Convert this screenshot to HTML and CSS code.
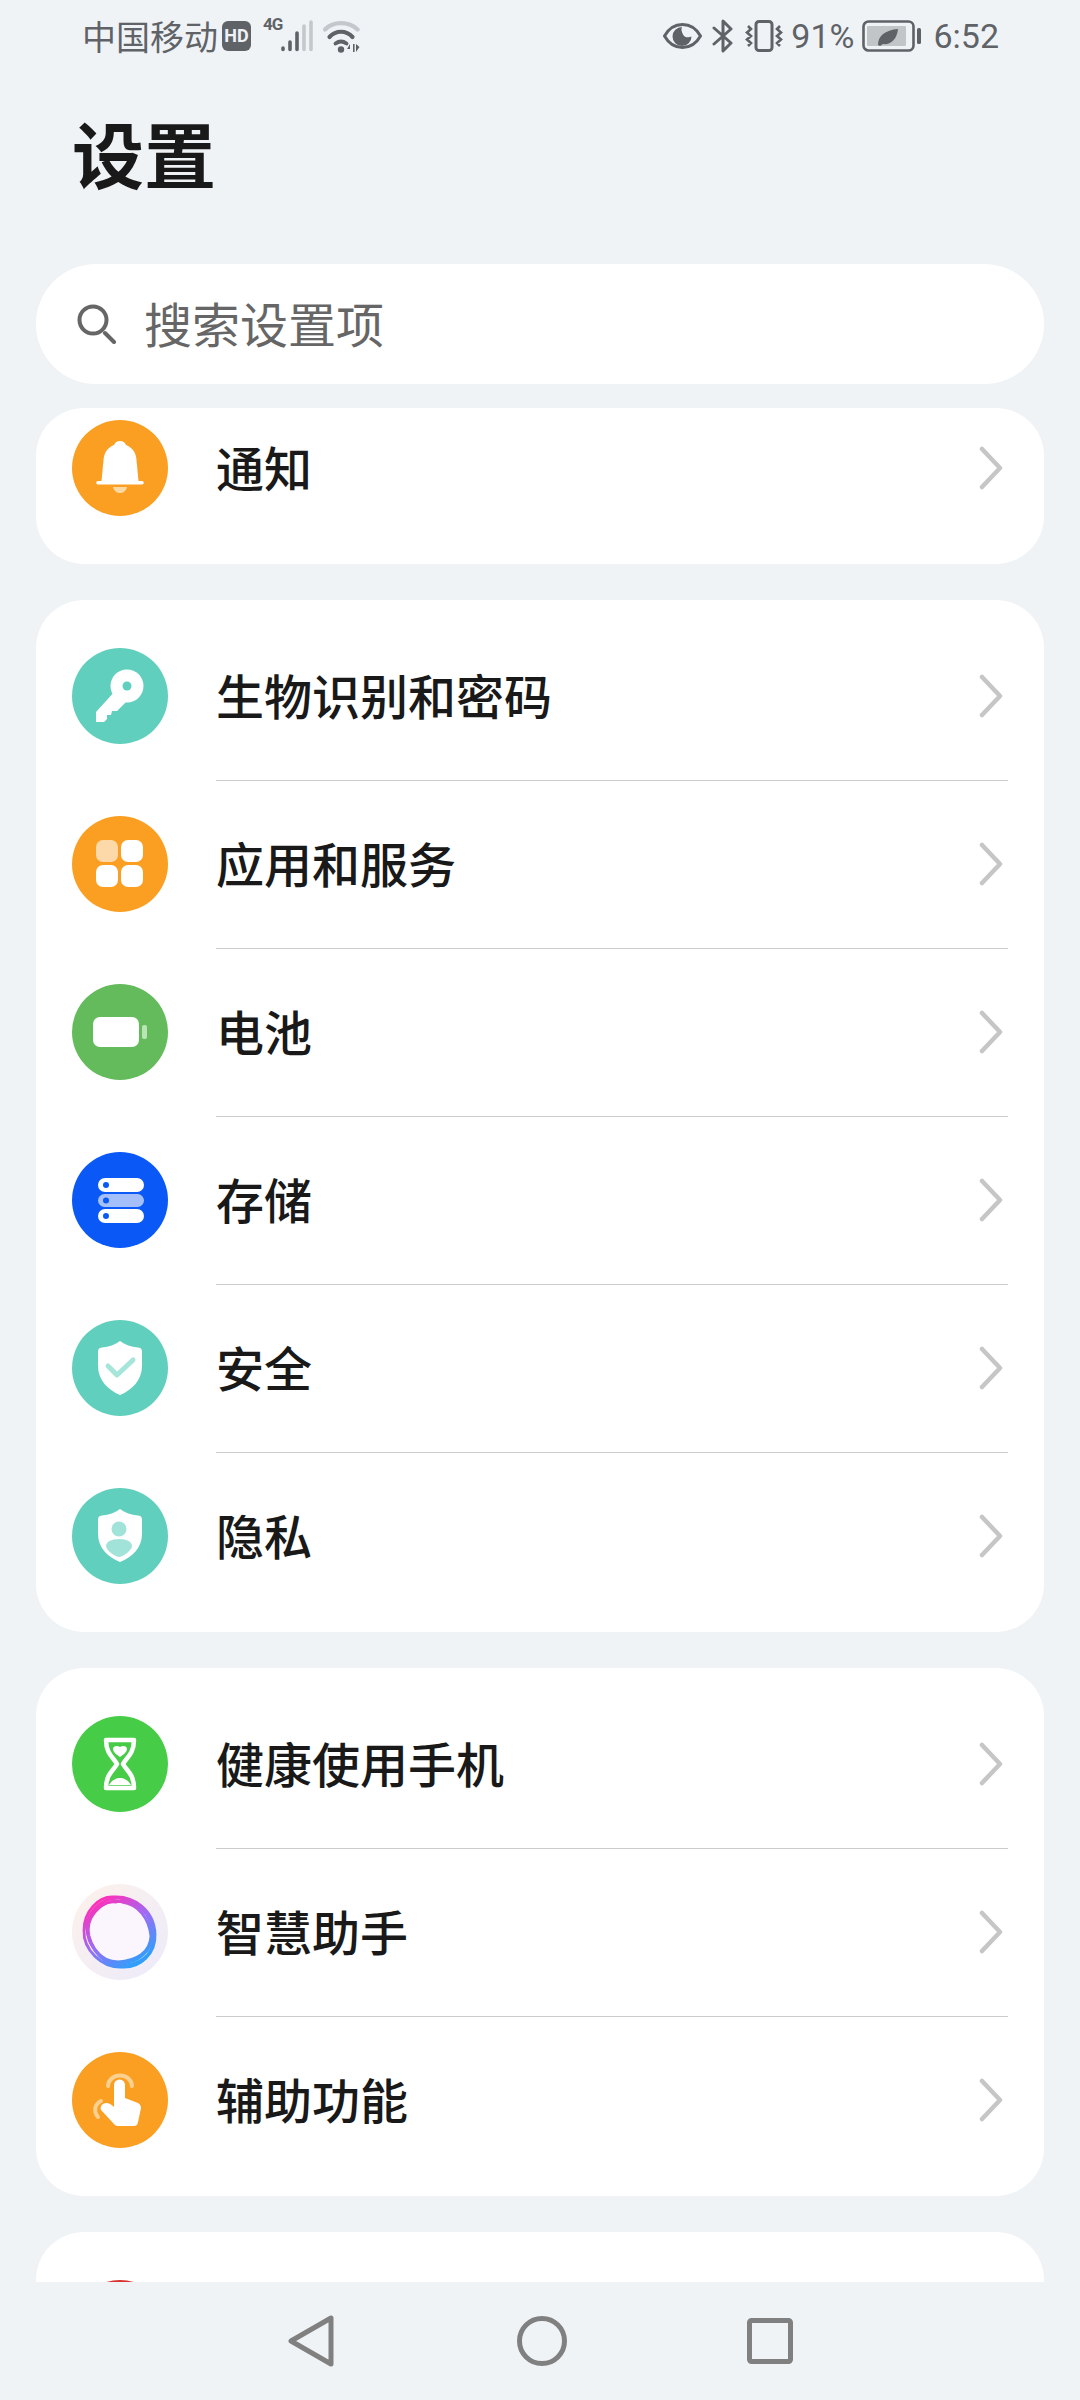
FILE: index.html
```html
<!DOCTYPE html>
<html lang="zh-CN">
<head>
<meta charset="utf-8">
<title>设置</title>
<link rel="stylesheet" href="styles.css">
</head>
<body>
<div class="screen">
  <header class="status">
    <div class="status-group">
      <span class="carrier">中国移动</span>
      <span class="hd">HD</span>
      <span class="net">4G</span>
      <svg class="sig" width="32" height="32" viewBox="0 0 32 32"><g fill="none" stroke-linecap="round" stroke-width="3.600"><path d="M2 28v1.500M9 22v7.500M16 13v16.500" stroke="#5f6368"/><path d="M23 6v23.500M30 2v27.500" stroke="#c4c8cc"/></g></svg>
      <svg class="wifi" width="37" height="33" viewBox="0 0 37 33"><path d="M2 9.500C10 1 26 1 34.500 9.500" fill="none" stroke="#c4c8cc" stroke-width="4.400" stroke-linecap="round"/><path d="M6.500 17C13 10 23 10 29.500 17" fill="none" stroke="#5f6368" stroke-width="4.200" stroke-linecap="round"/><path d="M12.500 23.500c4-3 7-3 11 0" fill="none" stroke="#5f6368" stroke-width="3.800" stroke-linecap="round"/><circle cx="18" cy="29.500" r="3.200" fill="#5f6368"/><path d="M27 24l-3 5h3zM30 24h1.600v8H30zM33 24v8l3.500-5z" fill="#5f6368"/></svg>
    </div>
    <div class="status-group">
      <svg width="39" height="26" viewBox="0 0 39 26"><path d="M1.500 13C6 5 12 1.500 19.500 1.500S33 5 37.500 13C33 21 27 24.500 19.500 24.500S6 21 1.500 13Z" fill="none" stroke="#5f6368" stroke-width="3"/><path d="M19 4a9.500 9.500 0 1 0 9.500 9.500c-3 1.500-7 1-8.500-2S18 6 19 4Z" fill="#5f6368"/></svg>
      <svg class="bt" width="22" height="34" viewBox="0 0 22 34"><path d="M2 9l17 15-8 8V2l8 8L2 25" fill="none" stroke="#5f6368" stroke-width="3" stroke-linejoin="round" stroke-linecap="round"/></svg>
      <svg class="vib" width="38" height="32" viewBox="0 0 38 32"><rect x="11" y="1.500" width="16" height="29" rx="3" fill="none" stroke="#5f6368" stroke-width="3"/><path d="M3 6l3 3-4 3.500 4 3.500-4 3.500 4 3.500-3 3M35 6l-3 3 4 3.500-4 3.500 4 3.500-4 3.500 3 3" fill="none" stroke="#5f6368" stroke-width="2.600"/></svg>
      <span class="pct">91%</span>
      <svg class="bat" width="60" height="32" viewBox="0 0 60 32"><rect x="1.500" y="1.500" width="50" height="29" rx="5" fill="none" stroke="#5f6368" stroke-width="2.600"/><rect x="5" y="6" width="39" height="20" rx="1" fill="#c2c5c8"/><path d="M16 25c0-9 7-15 20-16-1 11-8 16-15 15l-3 2z" fill="#5f6368"/><rect x="55" y="8" width="4" height="16" rx="1.500" fill="#5f6368"/></svg>
      <span class="time">6:52</span>
    </div>
  </header>

  <h1 class="title">设置</h1>

  <div class="search">
    <svg class="search-icon" width="40" height="40" viewBox="0 0 40 40"><circle cx="16" cy="16" r="13.500" fill="none" stroke="#666" stroke-width="4"/><path d="M28 29l9 9" stroke="#666" stroke-width="4" stroke-linecap="round"/></svg>
    <span class="search-text">搜索设置项</span>
  </div>

  <main class="list">
    <section class="card card-scrolled">
      <div class="row">
        <svg class="icon" width="96" height="96" viewBox="0 0 96 96"><circle cx="48" cy="48" r="48" fill="#fa9f22"/><path d="M42 25C35.500 27.500 32 33 31.500 40l-2 21H26a1.800 1.800 0 0 0 0 3.600h44a1.800 1.800 0 0 0 0-3.600h-3.500l-2-21C64 33 60.500 27.500 54 25c-1-2.500-3-4-6-4s-5 1.500-6 4Z" fill="#fff"/><path d="M41 67h14c-1 4-4 6-7 6s-6-2-7-6Z" fill="#fcd9a3"/></svg>
        <div class="row-body"><span class="label">通知</span><svg width="24" height="44" viewBox="0 0 24 44" class="chev"><path d="M3 3l18 19L3 41" fill="none" stroke="#c6c6c6" stroke-width="4.500" stroke-linecap="round" stroke-linejoin="round"/></svg></div>
      </div>
    </section>

    <section class="card">
      <div class="row">
        <svg class="icon" width="96" height="96" viewBox="0 0 96 96"><circle cx="48" cy="48" r="48" fill="#61cfbe"/><path d="M44 42L24 64v10h8l3-3v-4h4l1-4h5l11-11Z" fill="#fff"/><circle cx="55" cy="38" r="16.500" fill="#fff"/><circle cx="55" cy="38" r="4.500" fill="#61cfbe"/></svg>
        <div class="row-body"><span class="label">生物识别和密码</span><svg width="24" height="44" viewBox="0 0 24 44" class="chev"><path d="M3 3l18 19L3 41" fill="none" stroke="#c6c6c6" stroke-width="4.500" stroke-linecap="round" stroke-linejoin="round"/></svg></div>
      </div>
      <div class="row">
        <svg class="icon" width="96" height="96" viewBox="0 0 96 96"><circle cx="48" cy="48" r="48" fill="#fa9f22"/><rect x="24" y="24" width="22" height="22" rx="7" fill="#fdd8a8"/><rect x="49" y="24" width="22" height="22" rx="7" fill="#fff"/><rect x="24" y="49" width="22" height="22" rx="7" fill="#fff"/><rect x="49" y="49" width="22" height="22" rx="7" fill="#fff"/></svg>
        <div class="row-body"><span class="label">应用和服务</span><svg width="24" height="44" viewBox="0 0 24 44" class="chev"><path d="M3 3l18 19L3 41" fill="none" stroke="#c6c6c6" stroke-width="4.500" stroke-linecap="round" stroke-linejoin="round"/></svg></div>
      </div>
      <div class="row">
        <svg class="icon" width="96" height="96" viewBox="0 0 96 96"><circle cx="48" cy="48" r="48" fill="#64bb5c"/><rect x="21" y="33" width="46" height="30" rx="7" fill="#fff"/><rect x="70" y="41" width="5" height="14" rx="2" fill="#b9e4b4"/></svg>
        <div class="row-body"><span class="label">电池</span><svg width="24" height="44" viewBox="0 0 24 44" class="chev"><path d="M3 3l18 19L3 41" fill="none" stroke="#c6c6c6" stroke-width="4.500" stroke-linecap="round" stroke-linejoin="round"/></svg></div>
      </div>
      <div class="row">
        <svg class="icon" width="96" height="96" viewBox="0 0 96 96"><circle cx="48" cy="48" r="48" fill="#0a59f7"/><rect x="26" y="26" width="46" height="14" rx="7" fill="#fff"/><rect x="26" y="42" width="46" height="13" rx="6.500" fill="#a5bffb"/><rect x="26" y="57" width="46" height="14" rx="7" fill="#fff"/><circle cx="34" cy="33" r="3" fill="#0a59f7"/><circle cx="34" cy="48.500" r="3" fill="#0a59f7"/><circle cx="34" cy="64" r="3" fill="#0a59f7"/></svg>
        <div class="row-body"><span class="label">存储</span><svg width="24" height="44" viewBox="0 0 24 44" class="chev"><path d="M3 3l18 19L3 41" fill="none" stroke="#c6c6c6" stroke-width="4.500" stroke-linecap="round" stroke-linejoin="round"/></svg></div>
      </div>
      <div class="row">
        <svg class="icon" width="96" height="96" viewBox="0 0 96 96"><circle cx="48" cy="48" r="48" fill="#61cfbe"/><path d="M48 21C53 24.500 59 27 66 27.500 69 28 70 29 70 32V46C70 60 60 70 48 75 36 70 26 60 26 46V32C26 29 27 28 30 27.500 37 27 43 24.500 48 21Z" fill="#fff"/><path d="M36 46l9 9 16-15" fill="none" stroke="#a6e5da" stroke-width="5" stroke-linecap="round" stroke-linejoin="round"/></svg>
        <div class="row-body"><span class="label">安全</span><svg width="24" height="44" viewBox="0 0 24 44" class="chev"><path d="M3 3l18 19L3 41" fill="none" stroke="#c6c6c6" stroke-width="4.500" stroke-linecap="round" stroke-linejoin="round"/></svg></div>
      </div>
      <div class="row">
        <svg class="icon" width="96" height="96" viewBox="0 0 96 96"><circle cx="48" cy="48" r="48" fill="#61cfbe"/><path d="M48 21C53 24.500 59 27 66 27.500 69 28 70 29 70 32V46C70 60 60 69 48 74 36 69 26 60 26 46V32C26 29 27 28 30 27.500 37 27 43 24.500 48 21Z" fill="#fff"/><circle cx="47" cy="41" r="7.500" fill="#a2e3d9"/><path d="M47 51C55 51 60 54 60 58 60 62 52 68 47 69 42 68 34 62 34 58 34 54 39 51 47 51Z" fill="#a2e3d9"/></svg>
        <div class="row-body"><span class="label">隐私</span><svg width="24" height="44" viewBox="0 0 24 44" class="chev"><path d="M3 3l18 19L3 41" fill="none" stroke="#c6c6c6" stroke-width="4.500" stroke-linecap="round" stroke-linejoin="round"/></svg></div>
      </div>
    </section>

    <section class="card">
      <div class="row">
        <svg class="icon" width="96" height="96" viewBox="0 0 96 96"><circle cx="48" cy="48" r="48" fill="#47cc47"/><path d="M34 24H62C62 38 54 42 51 48 54 54 62 58 62 72H34C34 58 42 54 45 48 42 42 34 38 34 24Z" fill="none" stroke="#fff" stroke-width="4.500" stroke-linejoin="round"/><path d="M48 41c-3-2-7-5-7-8 0-3 4-4 7-2 3-2 7-1 7 2 0 3-4 6-7 8Z" fill="#fff"/><path d="M37 69c3-5 7-7 11-7s8 2 11 7Z" fill="#fff"/></svg>
        <div class="row-body"><span class="label">健康使用手机</span><svg width="24" height="44" viewBox="0 0 24 44" class="chev"><path d="M3 3l18 19L3 41" fill="none" stroke="#c6c6c6" stroke-width="4.500" stroke-linecap="round" stroke-linejoin="round"/></svg></div>
      </div>
      <div class="row">
        <svg class="icon" width="96" height="96" viewBox="0 0 96 96"><defs><linearGradient id="orb-bg" x1="0" y1="0" x2="1" y2="1"><stop offset="0" stop-color="#fdf1ea"/><stop offset="1" stop-color="#ecebfb"/></linearGradient><linearGradient id="orb-ring" gradientUnits="userSpaceOnUse" x1="24" y1="18" x2="64" y2="80"><stop offset="0" stop-color="#ff2fb8"/><stop offset=".5" stop-color="#9c6cf5"/><stop offset="1" stop-color="#2f9ffa"/></linearGradient></defs><circle cx="48" cy="48" r="48" fill="url(#orb-bg)"/><circle cx="48" cy="48" r="31" fill="#fbf5fd"/><g fill="none" stroke="url(#orb-ring)" stroke-width="2.800"><path d="M12 46C12 28 26 12 42 13 62 12 82 26 83 50 84 70 68 84 50 83 30 84 11 66 12 46Z"/><path d="M14 40C20 24 30 14 47 14 66 17 79 30 82 47 83 68 72 79 54 81 35 85 17 68 14 40Z"/><path d="M17 52C13 34 28 16 44 18 58 14 77 24 79 44 85 61 70 76 56 78 40 85 22 71 17 52Z"/><path d="M15 44C16 32 32 13 50 18 66 20 77 34 79 52 78 69 64 77 46 78 28 78 15 60 15 44Z"/></g></svg>
        <div class="row-body"><span class="label">智慧助手</span><svg width="24" height="44" viewBox="0 0 24 44" class="chev"><path d="M3 3l18 19L3 41" fill="none" stroke="#c6c6c6" stroke-width="4.500" stroke-linecap="round" stroke-linejoin="round"/></svg></div>
      </div>
      <div class="row">
        <svg class="icon" width="96" height="96" viewBox="0 0 96 96"><circle cx="48" cy="48" r="48" fill="#fa9f22"/><path d="M36 34C37 20 59 20 60 34" fill="none" stroke="#fcd08f" stroke-width="4" stroke-linecap="round"/><path d="M29 49C23 52 21 59 26 65" fill="none" stroke="#fcd08f" stroke-width="4" stroke-linecap="round"/><path d="M42 33a5.500 5.500 0 0 1 11 0V46L66 51C68 52 69 54 69 56L66 70C65.500 73 64 74 62 74H46C44 74 43 73 42 72L29 58C28 56 29 53 31 52 34 50 38 51 42 55Z" fill="#fff"/></svg>
        <div class="row-body"><span class="label">辅助功能</span><svg width="24" height="44" viewBox="0 0 24 44" class="chev"><path d="M3 3l18 19L3 41" fill="none" stroke="#c6c6c6" stroke-width="4.500" stroke-linecap="round" stroke-linejoin="round"/></svg></div>
      </div>
    </section>

    <section class="card">
      <div class="row">
        <svg class="icon" width="96" height="96" viewBox="0 0 96 96"><circle cx="48" cy="48" r="48" fill="#d9322e"/></svg>
      </div>
    </section>
  </main>

  <nav class="nav">
    <svg width="50" height="52" viewBox="0 0 50 52"><path d="M4 26L44 3V49Z" fill="none" stroke="#808080" stroke-width="5" stroke-linejoin="round"/></svg>
    <svg width="50" height="50" viewBox="0 0 50 50"><circle cx="25" cy="25" r="22.500" fill="none" stroke="#808080" stroke-width="5"/></svg>
    <svg width="46" height="46" viewBox="0 0 46 46"><rect x="2.500" y="2.500" width="41" height="41" rx="2" fill="none" stroke="#808080" stroke-width="5"/></svg>
  </nav>
</div>
</body>
</html>
```

FILE: styles.css
```css
* { box-sizing: border-box; }

html, body {
  margin: 0;
  padding: 0;
  background: #f0f3f6;
}

.screen {
  width: 1080px;
  height: 2400px;
  display: flex;
  flex-direction: column;
  overflow: hidden;
  background: #f0f3f6;
  font-family: "Noto Sans CJK SC", "Noto Sans", sans-serif;
  color: #191919;
}

.status {
  height: 72px;
  flex: none;
  display: flex;
  align-items: center;
  justify-content: space-between;
  padding: 0 81px 0 82px;
  color: #5f6368;
}

.status-group {
  display: flex;
  align-items: center;
}

.carrier {
  font-size: 34px;
  line-height: 40px;
}

.hd {
  margin-left: 4px;
  width: 29px;
  height: 30px;
  border-radius: 6px;
  background: #5f6368;
  color: #f0f3f6;
  font: 700 18px/30px "Roboto", sans-serif;
  text-align: center;
}

.net {
  align-self: flex-start;
  margin: 0 0 0 12px;
  width: 18px;
  font: 700 17px/16px "Roboto", sans-serif;
  letter-spacing: -1px;
}

.wifi { margin-left: 10px; }
.bt { margin-left: 10px; }
.vib { margin-left: 11px; }

.pct, .time {
  font: 400 34px/40px "Roboto", sans-serif;
}

.pct { margin-left: 8px; }
.bat { margin-left: 8px; }
.time { margin-left: 11px; }

.title {
  flex: none;
  margin: 0;
  height: 192px;
  padding: 44px 0 0 72px;
  font-size: 72px;
  line-height: 72px;
  font-weight: 700;
}

.search {
  flex: none;
  height: 120px;
  margin: 0 36px;
  padding-left: 41px;
  display: flex;
  align-items: center;
  gap: 27px;
  background: #fff;
  border-radius: 60px;
}

.search-text {
  font-size: 48px;
  line-height: 60px;
  color: #666;
  margin-bottom: 4px;
}

.list {
  flex: 1;
  min-height: 0;
  overflow: hidden;
  margin: 24px 36px 0;
  display: flex;
  flex-direction: column;
  gap: 36px;
}

.card {
  flex: none;
  padding: 12px 0;
  background: #fff;
  border-radius: 48px;
}

.card-scrolled {
  padding-top: 0;
  overflow: hidden;
}

.card-scrolled .row {
  margin-top: -24px;
}

.row {
  height: 168px;
  display: flex;
  align-items: center;
  padding: 0 36px;
}

.icon {
  flex: none;
  margin-right: 48px;
}

.row-body {
  flex: 1;
  align-self: stretch;
  display: flex;
  align-items: center;
  justify-content: space-between;
  margin-bottom: -1px;
  padding-right: 5px;
  border-bottom: 1px solid #cccccc;
}

.row:last-child .row-body {
  border-bottom: 0;
  margin-bottom: 0;
}

.label {
  font-size: 48px;
  line-height: 60px;
  font-weight: 500;
  margin-bottom: 5px;
}

.nav {
  flex: none;
  height: 118px;
  display: flex;
  align-items: center;
  justify-content: center;
  gap: 180px;
}
```
